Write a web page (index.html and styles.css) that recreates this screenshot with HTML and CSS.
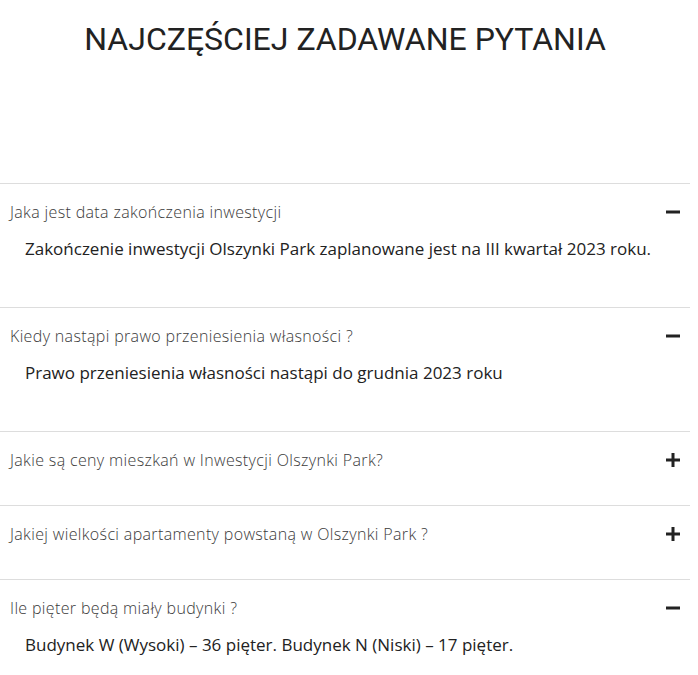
FILE: index.html
```html
<!DOCTYPE html>
<html lang="pl">
<head>
    <meta charset="UTF-8">
    <meta name="viewport" content="width=device-width, initial-scale=1.0">
    <title>FAQ - Olszynki Park</title>
    <link rel="stylesheet" href="styles.css">
</head>
<body>
    <div class="page">
        <h1 class="title">NAJCZĘŚCIEJ ZADAWANE PYTANIA</h1>

        <div class="faq">
            <div class="item open">
                <div class="question">
                    <span>Jaka jest data zakończenia inwestycji</span>
                    <svg class="icon" viewBox="0 0 14 14"><rect x="0" y="5.5" width="14" height="3"/></svg>
                </div>
                <div class="answer">Zakończenie inwestycji Olszynki Park zaplanowane jest na III kwartał 2023 roku.</div>
            </div>

            <div class="item open">
                <div class="question">
                    <span>Kiedy nastąpi prawo przeniesienia własności ?</span>
                    <svg class="icon" viewBox="0 0 14 14"><rect x="0" y="5.5" width="14" height="3"/></svg>
                </div>
                <div class="answer">Prawo przeniesienia własności nastąpi do grudnia 2023 roku</div>
            </div>

            <div class="item">
                <div class="question">
                    <span>Jakie są ceny mieszkań w Inwestycji Olszynki Park?</span>
                    <svg class="icon" viewBox="0 0 14 14"><rect x="0" y="5.5" width="14" height="3"/><rect x="5.5" y="0" width="3" height="14"/></svg>
                </div>
            </div>

            <div class="item">
                <div class="question">
                    <span>Jakiej wielkości apartamenty powstaną w Olszynki Park ?</span>
                    <svg class="icon" viewBox="0 0 14 14"><rect x="0" y="5.5" width="14" height="3"/><rect x="5.5" y="0" width="3" height="14"/></svg>
                </div>
            </div>

            <div class="item open">
                <div class="question">
                    <span>Ile pięter będą miały budynki ?</span>
                    <svg class="icon" viewBox="0 0 14 14"><rect x="0" y="5.5" width="14" height="3"/></svg>
                </div>
                <div class="answer">Budynek W (Wysoki) – 36 pięter. Budynek N (Niski) – 17 pięter.</div>
            </div>
        </div>
    </div>
</body>
</html>
```

FILE: styles.css
```css
body {
    margin: 0;
    background: #ffffff;
    color: #222222;
}

.page {
    width: 690px;
}

.title {
    margin: 0;
    padding-top: 20px;
    height: 183px;
    box-sizing: border-box;
    text-align: center;
    font-family: Roboto, "Liberation Sans", sans-serif;
    font-weight: 400;
    font-size: 32px;
    line-height: 38px;
    color: #222222;
}

.item {
    border-top: 1px solid #dddddd;
    padding-bottom: 32px;
}

.question {
    display: flex;
    align-items: center;
    justify-content: space-between;
    padding: 15px 10px 0 10px;
    line-height: 26px;
    font-family: "Open Sans", sans-serif;
    font-weight: 300;
    font-size: 16px;
    letter-spacing: 0.35px;
    color: #3a3a3a;
}

.icon {
    width: 14px;
    height: 14px;
    fill: #222222;
}

.answer {
    margin-top: 11px;
    padding: 0 25px 13px 25px;
    line-height: 26px;
    font-family: "Open Sans", sans-serif;
    font-size: 17px;
    color: #222222;
}
```
